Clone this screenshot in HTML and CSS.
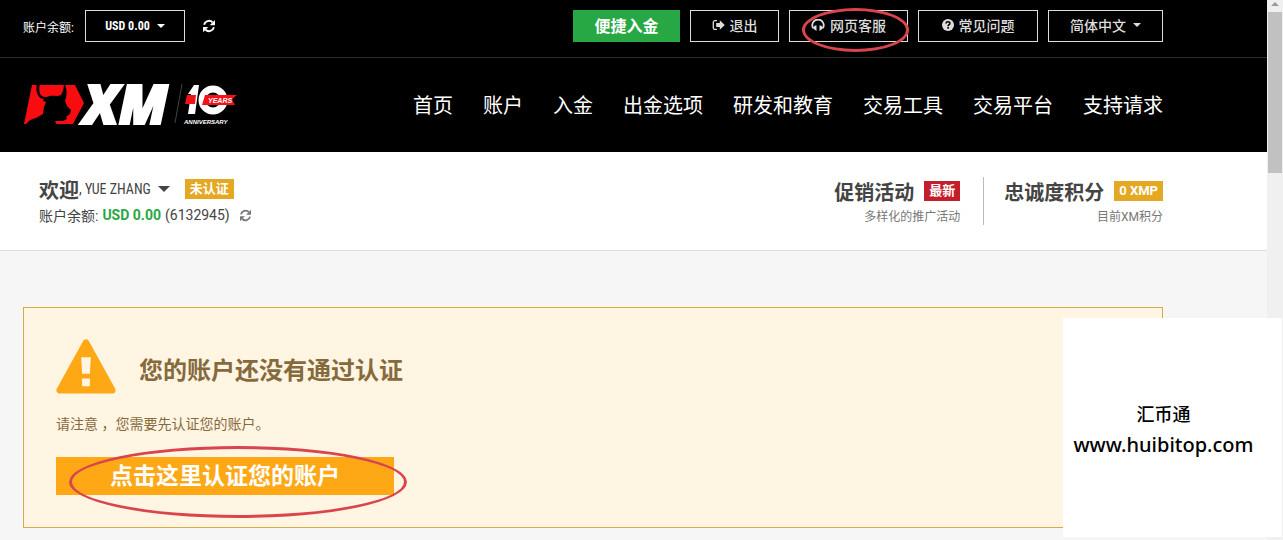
FILE: index.html
```html
<!DOCTYPE html>
<html lang="zh-CN">
<head>
  <meta charset="UTF-8">
  <meta name="viewport" content="width=device-width, initial-scale=1.0">
  <title>XM 会员中心</title>
  <link rel="stylesheet" href="styles.css">
</head>
<body>

  <!-- Shared icons -->
  <svg class="sprite" aria-hidden="true">
    <symbol id="icon-refresh" viewBox="0 0 16 16">
      <path d="M2.4 6.6A5.8 5.8 0 0 1 12 3.7" fill="none" stroke="currentColor" stroke-width="2.2"/>
      <path d="M14.8 1v6H8.8z" fill="currentColor"/>
      <path d="M13.6 9.4A5.8 5.8 0 0 1 4 12.3" fill="none" stroke="currentColor" stroke-width="2.2"/>
      <path d="M1.2 15V9h6z" fill="currentColor"/>
    </symbol>
  </svg>

  <div class="page">

    <!-- Top bar -->
    <div class="topbar">
      <div class="container topbar-inner">
        <div class="balance">
          <span class="balance-label">账户余额:</span>
          <button class="btn-outline btn-usd">USD 0.00 <span class="caret"></span></button>
          <button class="btn-icon" aria-label="刷新"><svg width="14" height="14"><use href="#icon-refresh"/></svg></button>
        </div>
        <div class="topbar-actions">
          <button class="btn-deposit">便捷入金</button>
          <button class="btn-outline btn-logout">
            <svg width="13" height="12" viewBox="0 0 13 12">
              <path d="M5 1.7H2.7a1.4 1.4 0 0 0-1.4 1.4v5.8a1.4 1.4 0 0 0 1.4 1.4H5" fill="none" stroke="currentColor" stroke-width="1.3"/>
              <path d="M4.2 4h3.6V1.2L12.8 6l-5 4.8V8H4.2z" fill="currentColor"/>
            </svg>
            退出
          </button>
          <button class="btn-outline btn-support">
            <svg width="14" height="12" viewBox="0 0 14 12">
              <path d="M2 9A5.7 5.7 0 1 1 12 9" fill="none" stroke="currentColor" stroke-width="1.8"/>
              <path d="M4 6.500h1.500V12L1.500 9zM10 6.500H8.500V12l4-3z" fill="currentColor"/>
            </svg>
            网页客服
            <span class="mark mark-support"></span>
          </button>
          <button class="btn-outline btn-faq">
            <svg width="12" height="12" viewBox="0 0 12 12">
              <circle cx="6" cy="6" r="6" fill="currentColor"/>
              <path d="M4 4.500C4.200 2.200 8 2.300 7.900 4.400 7.800 5.600 6.100 5.600 6.100 7.200M6.100 8v1.700" fill="none" stroke="#000" stroke-width="1.600"/>
            </svg>
            常见问题
          </button>
          <button class="btn-outline btn-lang">简体中文 <span class="caret"></span></button>
        </div>
      </div>
    </div>

    <!-- Main navigation -->
    <header class="header">
      <div class="container header-inner">
        <a class="logo" href="#" aria-label="XM">
          <svg width="214" height="44" viewBox="0 0 214 44">
            <path d="M9 2H52L61 20L50 41H1Z" fill="#f80c10"/>
            <path d="M14 0C13 5 13 9 15 12C17 15 19 16 21 16L20 18L23 19L21 24L20 31L13 35C8 36 5 38 2 43H34L33 40L32 38H40L44 36L43 34L47 31L48 27L44 23L42 18L43 15C44 10 44 5 41 0C41 5 40 9 38 12C34 14 30 12 27 13C22 15 19 14 17 11C16 8 16 4 17 0Z" fill="#000"/>
            <text class="logo-xm" x="60" y="41">XM</text>
            <path d="M159 1L152 40" stroke="#444"/>
            <path d="M171 2H176L172 31H165L168 11H165Z" fill="#fff"/>
            <circle cx="190" cy="17" r="11" fill="none" stroke="#fff" stroke-width="7"/>
            <path d="M164 12H173L172 21H162ZM182 12H214L209 16L212 22H179Z" fill="#f01218"/>
            <text class="logo-years" x="185" y="20">YEARS</text>
            <text class="logo-anniversary" x="161" y="41">ANNIVERSARY</text>
          </svg>
        </a>
        <nav class="nav">
          <a href="#">首页</a>
          <a href="#">账户</a>
          <a href="#">入金</a>
          <a href="#">出金选项</a>
          <a href="#">研发和教育</a>
          <a href="#">交易工具</a>
          <a href="#">交易平台</a>
          <a href="#">支持请求</a>
        </nav>
      </div>
    </header>

    <!-- User summary -->
    <section class="userbar">
      <div class="container userbar-inner">
        <div class="user">
          <div class="user-name">
            <strong>欢迎</strong><span class="name">, YUE ZHANG</span>
            <span class="caret caret-lg"></span>
            <span class="badge badge-gold">未认证</span>
          </div>
          <div class="user-balance">
            账户余额: <b>USD 0.00</b> (6132945)
            <button class="btn-icon" aria-label="刷新"><svg width="13" height="13"><use href="#icon-refresh"/></svg></button>
          </div>
        </div>
        <div class="stats">
          <div class="stat">
            <div class="stat-title">促销活动 <span class="badge badge-red">最新</span></div>
            <div class="stat-text">多样化的推广活动</div>
          </div>
          <div class="stat">
            <div class="stat-title">忠诚度积分 <span class="badge badge-gold">0 XMP</span></div>
            <div class="stat-text">目前XM积分</div>
          </div>
        </div>
      </div>
    </section>

    <!-- Verification notice -->
    <main class="container">
      <div class="notice">
        <div class="notice-head">
          <svg width="60" height="58" viewBox="0 0 62 58">
            <path d="M31 4L4 53H58Z" fill="#ffa816" stroke="#ffa816" stroke-width="7" stroke-linejoin="round"/>
            <path d="M26 19H36L35 36H27ZM27 41H35V49H27Z" fill="#fff5e2"/>
          </svg>
          <h2>您的账户还没有通过认证</h2>
        </div>
        <p>请注意 ，您需要先认证您的账户。</p>
        <button class="btn-verify">点击这里认证您的账户<span class="mark mark-verify"></span></button>
      </div>
    </main>
  </div>

  <!-- Scroll track -->
  <div class="scroll" aria-hidden="true">
    <span class="scroll-arrow"></span>
    <span class="scroll-thumb"></span>
  </div>

  <div class="watermark">
    <div class="watermark-name">汇币通</div>
    <div class="watermark-url">www.huibitop.com</div>
  </div>

</body>
</html>
```

FILE: styles.css
```css
* {
  box-sizing: border-box;
}

body {
  margin: 0;
  min-height: 100vh;
  display: flex;
  font-family: Roboto, "Noto Sans CJK SC", sans-serif;
  font-size: 14px;
  color: #444;
  background-color: #f6f6f6;
}

a {
  color: inherit;
  text-decoration: none;
}

button {
  font: inherit;
  color: inherit;
  background: none;
  border: none;
  padding: 0;
  cursor: pointer;
}

svg {
  display: block;
}

.sprite {
  position: absolute;
  width: 0;
  height: 0;
}

.page {
  flex: 1;
  min-width: 0;
}

.container {
  max-width: 1140px;
  margin-left: 23px;
}

.caret {
  display: inline-block;
  border: 4px solid transparent;
  border-top-color: currentColor;
  border-bottom: none;
}

.caret-lg {
  border-width: 6px;
  border-bottom: none;
}

/* Top bar */
.topbar {
  background-color: #000;
  color: #ddd;
  border-bottom: 1px solid #2b2b2b;
}

.topbar-inner {
  display: flex;
  justify-content: space-between;
  align-items: center;
  padding: 10px 0 15px;
}

.balance,
.topbar-actions {
  display: flex;
  align-items: center;
  gap: 10px;
}

.balance {
  color: #fff;
}

.balance-label {
  font-size: 12px;
  width: 52px;
  white-space: nowrap;
}

.balance .btn-icon {
  margin-left: 7px;
}

.btn-outline,
.btn-deposit {
  display: flex;
  align-items: center;
  justify-content: center;
  height: 32px;
  gap: 5px;
  padding-bottom: 2px;
  white-space: nowrap;
}

.btn-outline {
  position: relative;
  border: 1px solid #ddd;
  font-size: 14px;
  font-weight: 500;
}

.btn-usd {
  width: 100px;
  gap: 7px;
  padding-bottom: 0;
  font-family: "Roboto Condensed", "Liberation Sans Narrow", Roboto, sans-serif;
  font-weight: 700;
  font-size: 12px;
}

.btn-deposit {
  width: 107px;
  background-color: #28a745;
  color: #fff;
  font-size: 16px;
  font-weight: 700;
}

.btn-logout {
  width: 89px;
}

.btn-support {
  width: 119px;
}

.btn-faq {
  width: 120px;
}

.btn-lang {
  width: 115px;
  gap: 7px;
}

/* Header */
.header {
  background-color: #000;
  color: #fff;
}

.header-inner {
  display: flex;
  justify-content: space-between;
  align-items: center;
  height: 94px;
}

.logo svg {
  overflow: visible;
}

.logo-xm {
  font: italic 800 54px "Open Sans", sans-serif;
  fill: #fff;
  stroke: #fff;
  stroke-width: 2px;
}

.logo-years {
  font: italic 700 7px "Liberation Sans", sans-serif;
  fill: #fff;
}

.logo-anniversary {
  font: italic 700 6px "Liberation Sans", sans-serif;
  fill: #fff;
}

.nav {
  display: flex;
  gap: 30px;
  padding-bottom: 2px;
  font-size: 20px;
  white-space: nowrap;
}

/* User summary */
.userbar {
  background-color: #fff;
  border-bottom: 1px solid #ddd;
}

.userbar-inner {
  display: flex;
  justify-content: space-between;
  height: 98px;
  padding: 25px 0 0 16px;
}

.user-name {
  display: flex;
  align-items: center;
  height: 24px;
  font-size: 20px;
}

.user-name .name {
  font-family: "Roboto Condensed", "Liberation Sans Narrow", Roboto, sans-serif;
  font-size: 14px;
}

.user-name .caret {
  margin: 0 15px 0 7px;
}

.user-balance {
  display: flex;
  align-items: center;
  gap: 4px;
  height: 28px;
}

.user-balance b {
  color: #28a745;
}

.user-balance .btn-icon {
  margin-left: 5px;
  color: #777;
}

.badge {
  padding: 0 5px;
  color: #fff;
  font-size: 13px;
  font-weight: 700;
  line-height: 20px;
}

.badge-gold {
  background-color: #e5a823;
}

.badge-red {
  background-color: #c41e2b;
}

.stats {
  display: flex;
}

.stat {
  height: 48px;
  text-align: right;
}

.stat + .stat {
  margin-left: 23px;
  padding-left: 20px;
  border-left: 1px solid #bbb;
}

.stat-title {
  display: flex;
  align-items: center;
  gap: 10px;
  height: 28px;
  font-size: 20px;
  font-weight: 700;
}

.stat-text {
  font-size: 12px;
  line-height: 24px;
  color: #777;
}

/* Notice */
.notice {
  margin: 56px 0 12px;
  padding: 30px 32px 32px;
  border: 1px solid #d4ac45;
  background-color: #fff5e2;
  color: #856a3d;
}

.notice-head {
  display: flex;
  align-items: center;
  gap: 23px;
}

.notice h2 {
  margin: 8px 0 0;
  font-size: 24px;
  line-height: 32px;
}

.notice p {
  margin: 17px 0 22px;
  line-height: 22px;
}

.btn-verify {
  position: relative;
  display: block;
  width: 338px;
  height: 38px;
  padding-top: 2px;
  background-color: #ffa816;
  color: #fff;
  font-size: 23px;
  font-weight: 700;
  line-height: 36px;
}

/* Rings over the buttons */
.mark {
  position: absolute;
  border: 3px solid #d9454c;
  border-radius: 50%;
  pointer-events: none;
}

.mark-support {
  inset: -3px -2px -11px 12px;
}

.mark-verify {
  inset: -11px -13px -23px 13px;
}

/* Scroll track */
.scroll {
  width: 16px;
  background-color: #f0f0f0;
}

.scroll-arrow {
  display: block;
  margin: 2px 4px 6px;
  border: 4px solid transparent;
  border-top: none;
  border-bottom-color: #999;
}

.scroll-thumb {
  display: block;
  height: 161px;
  margin: 0 1px;
  background-color: #c1c1c1;
}

/* Watermark */
.watermark {
  position: fixed;
  right: 1px;
  bottom: 3px;
  width: 219px;
  height: 219px;
  padding: 81px 18px 0 0;
  background-color: #fff;
  color: #000;
  text-align: center;
  font-family: "Noto Sans", "Noto Sans CJK SC", sans-serif;
  font-weight: 500;
}

.watermark-name {
  font-size: 18px;
  line-height: 30px;
}

.watermark-url {
  font-size: 20px;
  line-height: 32px;
}
```
